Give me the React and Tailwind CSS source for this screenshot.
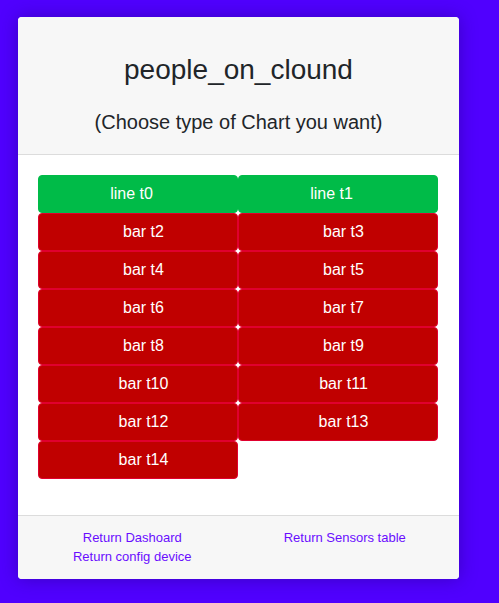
export default function App() {
  const buttons = [
    { label: "line t0", green: true },
    { label: "line t1", green: true },
  ];
  for (let i = 2; i <= 14; i++) buttons.push({ label: `bar t${i}`, green: false });
  return (
    <div className="min-h-screen w-full bg-[#5000fe] pt-[17px] pl-[18px] pb-[25px]" style={{ fontFamily: '"Liberation Sans", Arial, sans-serif' }}>
      <div className="w-[441px] rounded-[4px] bg-white overflow-hidden shadow-[0_0_18px_rgba(30,0,120,0.45)]">
        <div className="bg-[#f7f7f7] border-b border-[#dcdcdc] pt-[36px] pb-[20px] text-center text-[#212529]">
          <h2 className="text-[28px] leading-[34px]">people_on_clound</h2>
          <p className="mt-[23px] text-[20px] leading-[24px]">(Choose type of Chart you want)</p>
        </div>
        <div className="pt-[20px] pb-[36px] px-[20px]">
          <div className="grid grid-cols-[200px_200px]">
            {buttons.map((b) => (
              <div
                key={b.label}
                className={
                  b.green
                    ? "h-[38px] flex items-center justify-center rounded-[4px] border border-[#00bb48] bg-[#00bb48] text-white text-[16px] pr-[13px]"
                    : "h-[38px] flex items-center justify-center rounded-[4px] border border-[#e0002e] bg-[#c00000] text-white text-[16px] pl-[11px]"
                }
              >
                {b.label}
              </div>
            ))}
          </div>
        </div>
        <div className="bg-[#f7f7f7] border-t border-[#dcdcdc] px-[8px] pt-[12px] pb-[13px] grid grid-cols-2 text-[13px] leading-[19px] text-[#6a0dff]">
          <div className="flex flex-col items-center">
            <a href="#">Return Dashoard</a>
            <a href="#">Return config device</a>
          </div>
          <div className="flex flex-col items-center">
            <a href="#">Return Sensors table</a>
          </div>
        </div>
      </div>
    </div>
  );
}
